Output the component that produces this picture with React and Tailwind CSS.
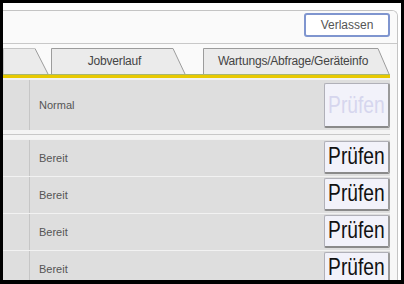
import React from 'react';

const small = "font-['Liberation_Sans','Arial',sans-serif]";

function Tab({ width, slantFrom, slantTo, leftLine = true, children }) {
  const h = 26;
  return (
    <div className="relative h-[26px] shrink-0 flex items-center justify-center" style={{ width }}>
      <svg className="absolute inset-0" width={width} height={h}>
        <polygon
          points={`${leftLine ? 1 : 0},${h} ${leftLine ? 1 : 0},0.5 ${slantFrom},0.5 ${slantTo},${h}`}
          fill="#ebebeb"
        />
        <polyline
          points={`${leftLine ? 1.5 : 0},${h} ${leftLine ? 1.5 : 0},0.5 ${slantFrom},0.5 ${slantTo},${h}`}
          fill="none"
          stroke="#9c9c9c"
          strokeWidth="1"
        />
        {!leftLine && <line x1="0" y1="0.5" x2={slantFrom} y2="0.5" stroke="#c4c4c4" />}
      </svg>
      <span className={`relative text-[12px] text-[#444] tracking-[-0.2px] ${small}`} style={{ marginRight: width - slantFrom - 6 }}>
        {children}
      </span>
    </div>
  );
}

function CheckButton({ disabled, tall }) {
  return (
    <button
      className={`w-[66px] ${tall ? 'h-[45px]' : 'h-[33px] pb-[3px]'} flex items-center justify-center bg-[#f2f2fa] border border-[#b0b0b8] border-b-2 border-r-2 border-b-[#8a8a8a] border-r-[#9a9a9a] rounded-[2px] overflow-hidden ${disabled ? 'text-[#d6d6ee]' : 'text-[#111]'}`}
    >
      <span className={`inline-block text-[24px] leading-none scale-x-[0.8] ${small}`}>Prüfen</span>
    </button>
  );
}

function Row({ label, disabled, tall }) {
  return (
    <div className={`flex bg-[#dedede] border-t border-[#f2f2f2] ${tall ? 'h-[52px] border-t-2' : 'h-[37px]'}`}>
      <div className="w-[27px] shrink-0 border-r border-[#c6c6c6]" />
      <div className={`flex-1 flex items-center pl-[9px] text-[11px] text-[#555] ${small}`}>{label}</div>
      <div className={`flex ${tall ? 'items-start pt-[3px]' : 'items-start pt-[1px]'}`}>
        <CheckButton disabled={disabled} tall={tall} />
      </div>
    </div>
  );
}

export default function App() {
  return (
    <div className="w-[404px] h-[284px] bg-black pt-[3px] pl-[3px] pr-[3px] pb-[4px] overflow-hidden">
      <div className="h-full bg-white pt-[7px] pr-[3px]">
        <div className="h-full flex flex-col bg-[#f7f7f7] border-t border-r border-[#c4c4c4] rounded-tr-[6px] overflow-hidden">
          <div className="h-[33px] shrink-0 flex justify-end items-start pt-[2px] pr-[7px] border-b border-[#c8c8c8] bg-[#fafafa]">
            <button className={`w-[86px] h-[24px] flex items-center justify-center bg-white border-2 border-[#7f95cf] rounded-[3px] text-[12px] text-[#555] ${small}`}>
              Verlassen
            </button>
          </div>
          <div className="mr-[7px] flex flex-col">
            <div className="h-[30px] pt-[4px] flex bg-[#fafafa]">
              <Tab width={46} slantFrom={32} slantTo={45} leftLine={false} />
              <div className="w-[1px] shrink-0" />
              <Tab width={136} slantFrom={123} slantTo={135}>Jobverlauf</Tab>
              <div className="w-[16px] shrink-0" />
              <Tab width={188} slantFrom={176} slantTo={187}>Wartungs/Abfrage/Geräteinfo</Tab>
            </div>
            <div className="h-[1px] bg-[#a8b870]" />
            <div className="h-[3px] bg-[#e8c900]" />
            <Row label="Normal" disabled tall />
            <div className="h-[9px] bg-[#f4f4f4] flex flex-col justify-center">
              <div className="h-[1px] bg-[#c8c8c8]" />
            </div>
            <Row label="Bereit" />
            <Row label="Bereit" />
            <Row label="Bereit" />
            <Row label="Bereit" />
          </div>
        </div>
      </div>
    </div>
  );
}
